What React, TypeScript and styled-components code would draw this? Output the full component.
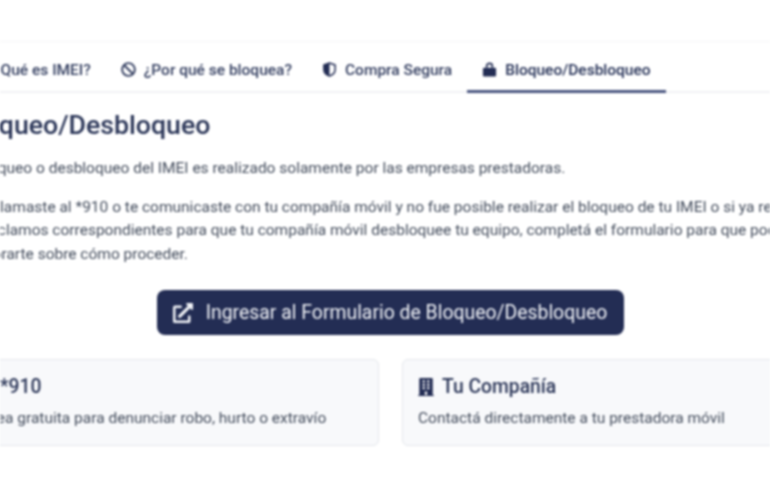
import React from "react";
import styled, { createGlobalStyle } from "styled-components";
import { FaBan, FaPhone, FaQuestionCircle, FaBuilding, FaExternalLinkAlt } from "react-icons/fa";

const Global = createGlobalStyle`
  html, body { margin: 0; padding: 0; background: #fff; }
  body { font-family: Roboto, "Liberation Sans", sans-serif; }
`;

const Viewport = styled.div`
  width: 770px;
  height: 500px;
  overflow: hidden;
  background: #fff;
  filter: blur(0.8px);
`;

const Panel = styled.main`
  width: 893px;
  margin: 41px 0 0 -56px;
  border-top: 1px solid #f5f5f6;
`;

const TabBar = styled.nav`
  display: flex;
  box-sizing: border-box;
  height: 51px;
  padding-left: 11px;
  border-bottom: 2px solid #f1f2f4;
`;

const Tab = styled.div<{ $active?: boolean }>`
  display: flex;
  align-items: center;
  gap: 8px;
  height: 51px;
  box-sizing: border-box;
  padding: 7px 15px 0;
  font-size: 15.5px;
  font-weight: 500;
  color: ${(p) => (p.$active ? "#232f55" : "#333e60")};
  border-bottom: 3px solid ${(p) => (p.$active ? "#4a5680" : "transparent")};
  white-space: nowrap;
  svg { flex: none; width: 15px; height: 15px; }
`;

const Body = styled.section`
  padding: 16px 16px 0;
`;

const Title = styled.h2`
  margin: 0 0 16px;
  font-size: 26.7px;
  line-height: 32px;
  font-weight: 500;
  color: #2b3658;
`;

const Text = styled.p`
  margin: 0 -20px 15px 0;
  font-size: 15.5px;
  line-height: 23.5px;
  color: #434c5c;
`;

const ButtonRow = styled.div`
  display: flex;
  justify-content: center;
  margin-top: 24px;
`;

const Cta = styled.a`
  display: flex;
  align-items: center;
  gap: 13px;
  height: 45px;
  padding: 0 17px 0 16px;
  border-radius: 8px;
  background: #232d54;
  color: #f1f3f7;
  font-size: 19.4px;
  font-weight: 400;
  white-space: nowrap;
  svg { width: 20px; height: 20px; }
`;

const Cards = styled.div`
  display: grid;
  grid-template-columns: 1fr 1fr;
  gap: 23px;
  margin-top: 24px;
`;

const Card = styled.article`
  box-sizing: border-box;
  height: 87px;
  padding: 15px;
  background: #f8f9fb;
  border: 1px solid #e4e7ec;
  border-radius: 6px;
`;

const CardTitle = styled.h3`
  display: flex;
  align-items: center;
  gap: 8px;
  margin: 0 0 9px;
  font-size: 19.3px;
  line-height: 24px;
  font-weight: 500;
  color: #2b3658;
  svg { width: 16px; height: 18px; color: #232d54; }
`;

const CardText = styled.p`
  margin: 0;
  font-size: 15.5px;
  line-height: 20px;
  color: #434c5c;
`;

const ShieldIcon = () => (
  <svg viewBox="0 0 16 16" aria-hidden="true">
    <path d="M8 1 L14 3.2 V8 C14 11.5 11 14 8 15 C5 14 2 11.5 2 8 V3.2 Z" fill="none" stroke="#232d54" strokeWidth="1.6" strokeLinejoin="round" />
    <path d="M8 1 L2 3.2 V8 C2 11.5 5 14 8 15 Z" fill="#232d54" />
  </svg>
);

const LockIcon = () => (
  <svg viewBox="0 0 16 16" aria-hidden="true">
    <path d="M5 6 V4.2 C5 2.6 6.3 1.5 8 1.5 C9.7 1.5 11 2.6 11 4.2 V6" fill="none" stroke="#232d54" strokeWidth="1.8" />
    <rect x="1" y="6" width="14" height="9.5" rx="1.4" fill="#232d54" />
  </svg>
);

export default function App() {
  return (
    <Viewport>
      <Global />
      <Panel>
        <TabBar>
          <Tab><FaQuestionCircle />¿Qué es IMEI?</Tab>
          <Tab><FaBan />¿Por qué se bloquea?</Tab>
          <Tab><ShieldIcon />Compra Segura</Tab>
          <Tab $active><LockIcon />Bloqueo/Desbloqueo</Tab>
        </TabBar>
        <Body>
          <Title>Bloqueo/Desbloqueo</Title>
          <Text>El bloqueo o desbloqueo del IMEI es realizado solamente por las empresas prestadoras.</Text>
          <Text>
            Si ya llamaste al *910 o te comunicaste con tu compañía móvil y no fue posible realizar el bloqueo de tu IMEI o si ya realizaste los reclamos correspondientes para que tu compañía móvil desbloquee tu equipo, completá el formulario para que podamos asesorarte sobre cómo proceder.
          </Text>
          <ButtonRow>
            <Cta><FaExternalLinkAlt />Ingresar al Formulario de Bloqueo/Desbloqueo</Cta>
          </ButtonRow>
          <Cards>
            <Card>
              <CardTitle><FaPhone />*910</CardTitle>
              <CardText>Línea gratuita para denunciar robo, hurto o extravío</CardText>
            </Card>
            <Card>
              <CardTitle><FaBuilding />Tu Compañía</CardTitle>
              <CardText>Contactá directamente a tu prestadora móvil</CardText>
            </Card>
          </Cards>
        </Body>
      </Panel>
    </Viewport>
  );
}
